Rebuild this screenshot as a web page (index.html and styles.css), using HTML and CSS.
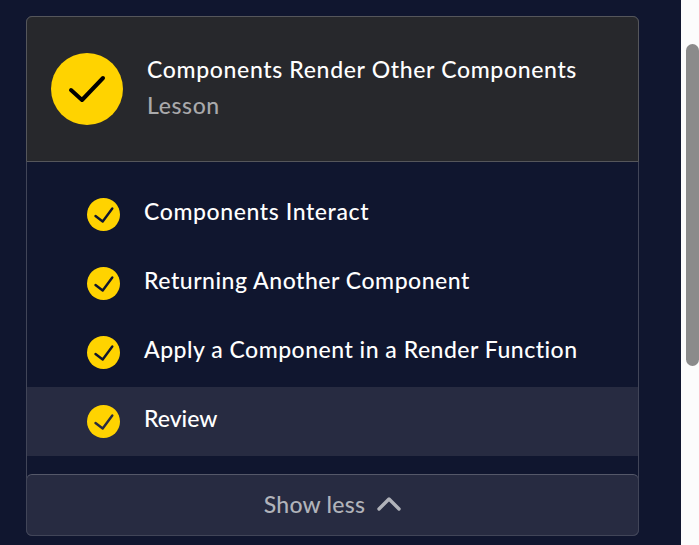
FILE: index.html
```html
<!DOCTYPE html>
<html lang="en">
<head>
<meta charset="utf-8">
<title>Lesson</title>
<link rel="stylesheet" href="styles.css">
</head>
<body>
<main class="page">
  <section class="card">
    <header class="card-header">
      <svg class="badge" viewBox="0 0 72 72"><circle cx="36" cy="36" r="36" fill="#ffd300"/><path d="M20 37 31 47 52 25" fill="none" stroke="#000" stroke-width="4" stroke-linecap="round" stroke-linejoin="round"/></svg>
      <div class="heading">
        <h1 class="title"><span class="t-title">Components Render Other Components</span></h1>
        <p class="kind"><span class="t-kind">Lesson</span></p>
      </div>
    </header>
    <ul class="list">
      <li class="item"><svg class="check" viewBox="0 0 33 33"><circle cx="16.5" cy="16.5" r="16.5"/><path d="M8.5 18 15.7 23.5 25.3 10.5"/></svg><span class="t-one">Components Interact</span></li>
      <li class="item"><svg class="check" viewBox="0 0 33 33"><circle cx="16.5" cy="16.5" r="16.5"/><path d="M8.5 18 15.7 23.5 25.3 10.5"/></svg><span class="t-two">Returning Another Component</span></li>
      <li class="item"><svg class="check" viewBox="0 0 33 33"><circle cx="16.5" cy="16.5" r="16.5"/><path d="M8.5 18 15.7 23.5 25.3 10.5"/></svg><span class="t-three">Apply a Component in a Render Function</span></li>
      <li class="item active"><svg class="check" viewBox="0 0 33 33"><circle cx="16.5" cy="16.5" r="16.5"/><path d="M8.5 18 15.7 23.5 25.3 10.5"/></svg><span class="t-four">Review</span></li>
    </ul>
    <button class="toggle" type="button"><span class="t-toggle">Show less</span><svg class="chevron" viewBox="0 0 24 14"><path d="M2 12 12 2 22 12"/></svg></button>
  </section>
</main>
<aside class="scrollbar"><div class="thumb"></div></aside>
</body>
</html>
```
FILE: styles.css
```css
* { box-sizing: border-box; }
body {
  margin: 0;
  height: 545px;
  display: flex;
  overflow: hidden;
  background: #10162f;
  color: #fff;
  font: 500 23px/30px Lato, "Liberation Sans", sans-serif;
  font-variant-ligatures: none;
}
.page { width: 681px; padding: 16px 0 0 26px; }
.card {
  width: 613px;
  height: 520px;
  display: flex;
  flex-direction: column;
  border: 1px solid #414558;
  border-radius: 6px;
}
.card-header {
  height: 146px;
  margin: -1px -1px 0;
  display: flex;
  align-items: center;
  padding-left: 24px;
  background: #27282c;
  border: 1px solid #55565b;
  border-radius: 6px 6px 0 0;
}
.badge { width: 72px; height: 72px; flex: none; }
.heading { margin: -4px 0 0 24px; }
.title, .kind { margin: 0; font: inherit; line-height: 36px; white-space: nowrap; font-variant-ligatures: none; }
.kind { color: #a9a9ab; }
.t-title { letter-spacing: 0.66px; }
.t-kind { letter-spacing: 0.6px; }
.t-one { letter-spacing: 0.6px; }
.t-two { letter-spacing: 0.53px; }
.t-three { letter-spacing: 0.5px; }
.t-toggle { letter-spacing: 0.25px; }
.list { list-style: none; margin: 0; padding: 18px 0; }
.item {
  height: 69px;
  display: flex;
  align-items: center;
  gap: 24px;
  padding: 0 0 8px 60px;
  white-space: nowrap;
}
.active { background: #272b41; }
.check { width: 33px; height: 33px; flex: none; margin-top: 8px; }
.check circle { fill: #ffd300; }
.check path { fill: none; stroke: #10162f; stroke-width: 2.4; stroke-linecap: round; stroke-linejoin: round; }
.active .check path { stroke: #272b41; }
.toggle {
  height: 62px;
  margin: 0 -1px -1px;
  padding: 0 0 3px;
  display: flex;
  align-items: center;
  justify-content: center;
  gap: 12px;
  font: inherit;
  color: #b1b3ba;
  background: #272b41;
  border: 1px solid #414558;
  border-top-color: #555869;
  border-radius: 6px;
}
.chevron { width: 24px; height: 14px; margin-top: 1px; }
.chevron path { fill: none; stroke: currentColor; stroke-width: 3.4; stroke-linecap: round; stroke-linejoin: round; }
.scrollbar { width: 18px; padding: 44px 0 0 5px; background: #fcfcfc; }
.thumb { width: 13px; height: 322px; border-radius: 7px; background: #8b8b8b; }
```
